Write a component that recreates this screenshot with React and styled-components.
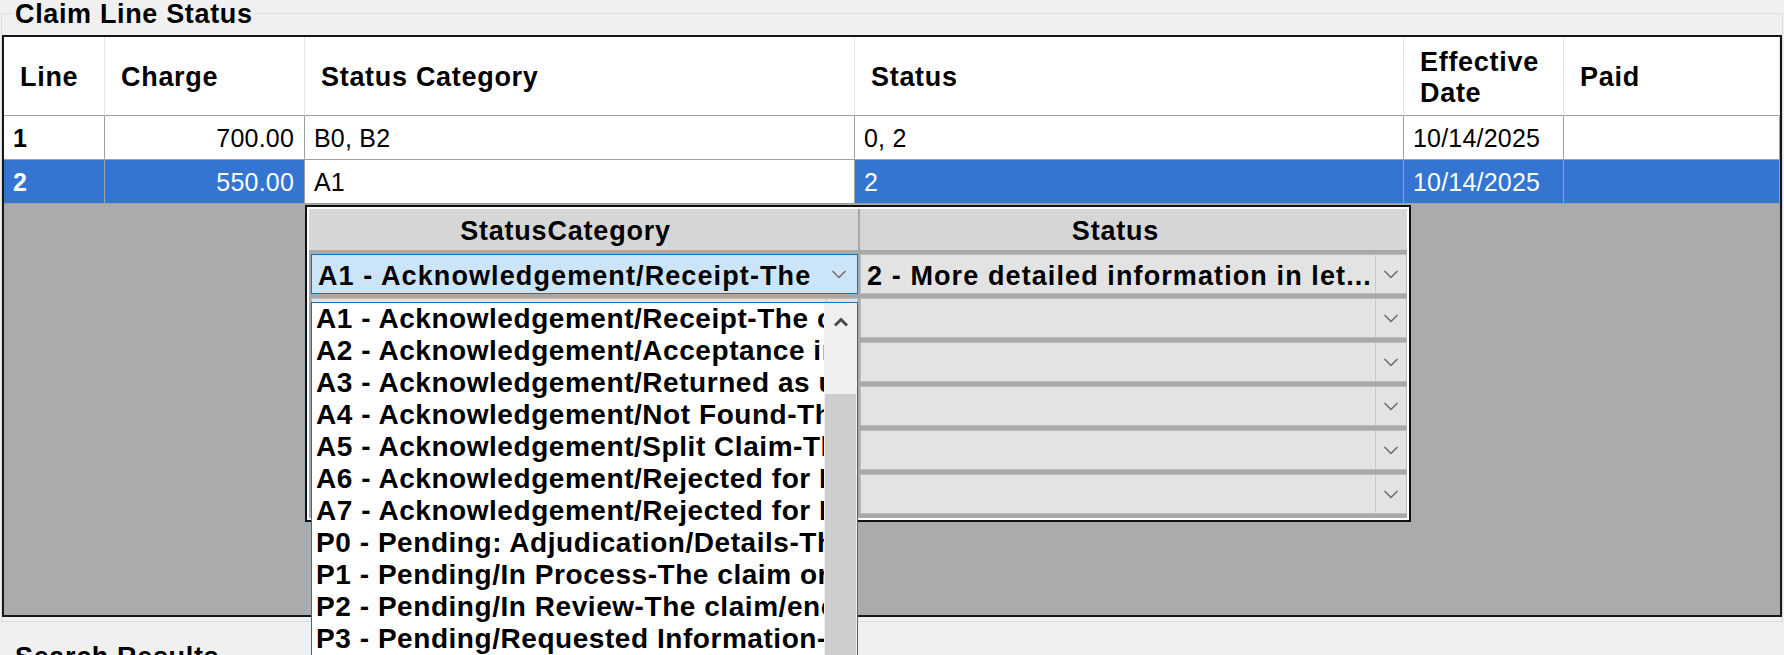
import React from 'react';
import styled, { createGlobalStyle } from 'styled-components';

const GlobalStyle = createGlobalStyle`
  html, body {
    margin: 0;
    padding: 0;
    overflow: hidden;
  }
  body {
    background: #f0f0f0;
    color: #000;
    font-family: "Liberation Sans", Arial, sans-serif;
  }
`;

const COLUMNS = '101px 200px 550px 549px 160px 1fr';

const lines = [
  { line: '1', charge: '700.00', category: 'B0, B2', status: '0, 2', date: '10/14/2025', paid: '' },
  { line: '2', charge: '550.00', category: 'A1', status: '2', date: '10/14/2025', paid: '', selected: true },
];

const categories = [
  'A1 - Acknowledgement/Receipt-The claim/encounter has been received.',
  'A2 - Acknowledgement/Acceptance into adjudication system-The claim/encounter has been accepted.',
  'A3 - Acknowledgement/Returned as unprocessable claim-The claim/encounter has been rejected.',
  'A4 - Acknowledgement/Not Found-The claim/encounter can not be found in the adjudication system.',
  'A5 - Acknowledgement/Split Claim-The claim/encounter has been split upon acceptance.',
  'A6 - Acknowledgement/Rejected for Missing Information-The claim/encounter is missing information.',
  'A7 - Acknowledgement/Rejected for Invalid Information-The claim/encounter has invalid information.',
  'P0 - Pending: Adjudication/Details-This is a generic message about a pended claim.',
  'P1 - Pending/In Process-The claim or encounter is in the adjudication system.',
  'P2 - Pending/In Review-The claim/encounter is suspended pending review.',
  'P3 - Pending/Requested Information-The claim or encounter is waiting for information.',
  'P4 - Pending/Patient Requested Information-The claim or encounter is waiting for patient information.',
];

const Page = styled.div`
  width: 1784px;
  height: 655px;
  box-sizing: border-box;
  padding: 0 1px;
  overflow: hidden;
`;

const GroupBox = styled.fieldset`
  margin: ${(p) => p.$top || 0}px 0 0;
  padding: 8px 0 4px;
  min-width: 0;
  border: 1px solid #dcdcdc;
`;

const Legend = styled.legend`
  margin-left: 11px;
  padding: 2px 2px 0;
  font-size: 27px;
  font-weight: bold;
  line-height: 25px;
  letter-spacing: 0.65px;
`;

const Grid = styled.div`
  position: relative;
  height: 582px;
  box-sizing: border-box;
  border: 2px solid #161616;
  background: #ababab;
`;

const Row = styled.div`
  display: grid;
  grid-template-columns: ${COLUMNS};
  height: ${(p) => p.$height}px;
`;

const HeaderCell = styled.div`
  display: flex;
  align-items: center;
  padding: 3px 10px 0 16px;
  background: #fff;
  border-right: 1px solid #e4e4e4;
  border-bottom: 1px solid #a0a0a0;
  font-size: 27px;
  font-weight: bold;
  line-height: 31px;
  letter-spacing: 0.7px;
`;

const Cell = styled.div`
  display: flex;
  align-items: center;
  justify-content: ${(p) => (p.$right ? 'flex-end' : 'flex-start')};
  padding: 2px 10px 0 9px;
  overflow: hidden;
  white-space: nowrap;
  background: ${(p) => (p.$selected ? '#3375d0' : '#fff')};
  color: ${(p) => (p.$selected ? '#fff' : '#000')};
  border-right: 1px solid #a0a0a0;
  border-bottom: 1px solid #a0a0a0;
  font-size: 25px;
  font-weight: ${(p) => (p.$bold ? 'bold' : 'normal')};
  letter-spacing: 0.2px;
`;

const Popup = styled.div`
  position: absolute;
  left: 301px;
  top: 168px;
  width: 1106px;
  height: 317px;
  box-sizing: border-box;
  border: 2px solid #111;
  background: #fff;
`;

const PopupBody = styled.div`
  display: grid;
  grid-template-columns: 549px 1fr;
  grid-template-rows: 41px repeat(6, 40px);
  row-gap: 4px;
  column-gap: 2px;
  margin: 2px;
  height: calc(100% - 4px);
  background: #a8a8a8;
`;

const PopupHeader = styled.div`
  display: flex;
  align-items: center;
  justify-content: center;
  padding: 4px 36px 0 0;
  background: #d6d6d6;
  font-size: 27px;
  font-weight: bold;
  letter-spacing: 0.8px;
`;

const Combo = styled.div`
  display: flex;
  align-items: center;
  height: 40px;
  box-sizing: border-box;
  margin-left: ${(p) => (p.$inset ? 2 : 0)}px;
  background: ${(p) => (p.$focused ? '#cce4f7' : '#e3e3e3')};
  border: 1px solid ${(p) => (p.$focused ? '#0078d7' : '#bdbdbd')};
  font-size: 27px;
  font-weight: bold;
  letter-spacing: 1.1px;
`;

const ComboText = styled.span`
  flex: 1;
  min-width: 0;
  padding: 4px 0 0 6px;
  overflow: hidden;
  white-space: nowrap;
`;

const ComboButton = styled.span`
  display: flex;
  align-items: center;
  justify-content: center;
  align-self: stretch;
  width: ${(p) => (p.$wide ? 37 : 30)}px;
  border-left: ${(p) => (p.$divider ? '1px solid #c6c6c6' : 'none')};
`;

const DropList = styled.div`
  position: absolute;
  left: 4px;
  top: 95px;
  z-index: 2;
  display: flex;
  width: 547px;
  height: 370px;
  box-sizing: border-box;
  border: 1px solid #0078d7;
  border-bottom: none;
  background: #fff;
`;

const Items = styled.div`
  flex: 1;
  min-width: 0;
  overflow: hidden;
`;

const Item = styled.div`
  height: 32px;
  padding-left: 4px;
  overflow: hidden;
  white-space: nowrap;
  font-size: 28px;
  font-weight: bold;
  line-height: 32px;
  letter-spacing: 0.55px;
`;

const ScrollBar = styled.div`
  display: flex;
  flex-direction: column;
  width: 33px;
  background: #f0f0f0;
`;

const ScrollArrow = styled.div`
  display: flex;
  align-items: center;
  justify-content: center;
  height: 38px;
`;

const ScrollTrack = styled.div`
  height: 53px;
`;

const ScrollThumb = styled.div`
  flex: 1;
  margin: 0 1px;
  background: #cdcdcd;
`;

const Chevron = ({ up }) => (
  <svg width="16" height="10" viewBox="0 0 16 10">
    <polyline
      points={up ? '2,8.5 8,2.5 14,8.5' : '1.5,2 8,8.5 14.5,2'}
      fill="none"
      stroke={up ? '#4a4a4a' : '#6a6a6a'}
      strokeWidth={up ? 3 : 1.5}
    />
  </svg>
);

const StatusCombo = ({ text }) => (
  <Combo>
    <ComboText>{text}</ComboText>
    <ComboButton $divider>
      <Chevron />
    </ComboButton>
  </Combo>
);

const EditPopup = () => (
  <Popup>
    <PopupBody>
      <PopupHeader>StatusCategory</PopupHeader>
      <PopupHeader>Status</PopupHeader>
      <Combo $focused $inset>
        <ComboText>A1 - Acknowledgement/Receipt-The</ComboText>
        <ComboButton $wide>
          <Chevron />
        </ComboButton>
      </Combo>
      <StatusCombo text="2 - More detailed information in let..." />
      {[0, 1, 2, 3, 4].map((i) => (
        <React.Fragment key={i}>
          <Combo $inset>
            <ComboText />
            <ComboButton $divider>
              <Chevron />
            </ComboButton>
          </Combo>
          <StatusCombo text="" />
        </React.Fragment>
      ))}
    </PopupBody>
    <DropList>
      <Items>
        {categories.map((c) => (
          <Item key={c}>{c}</Item>
        ))}
      </Items>
      <ScrollBar>
        <ScrollArrow>
          <Chevron up />
        </ScrollArrow>
        <ScrollTrack />
        <ScrollThumb />
      </ScrollBar>
    </DropList>
  </Popup>
);

export default function App() {
  return (
    <>
      <GlobalStyle />
      <Page>
        <GroupBox>
          <Legend>Claim Line Status</Legend>
          <Grid>
            <Row $height={79}>
              <HeaderCell>Line</HeaderCell>
              <HeaderCell>Charge</HeaderCell>
              <HeaderCell>Status Category</HeaderCell>
              <HeaderCell>Status</HeaderCell>
              <HeaderCell>Effective Date</HeaderCell>
              <HeaderCell>Paid</HeaderCell>
            </Row>
            {lines.map((l) => (
              <Row key={l.line} $height={44}>
                <Cell $bold $selected={l.selected}>{l.line}</Cell>
                <Cell $right $selected={l.selected}>{l.charge}</Cell>
                <Cell>{l.category}</Cell>
                <Cell $selected={l.selected}>{l.status}</Cell>
                <Cell $selected={l.selected}>{l.date}</Cell>
                <Cell $selected={l.selected}>{l.paid}</Cell>
              </Row>
            ))}
            <EditPopup />
          </Grid>
        </GroupBox>
        <GroupBox $top={21}>
          <Legend>Search Results</Legend>
        </GroupBox>
      </Page>
    </>
  );
}
